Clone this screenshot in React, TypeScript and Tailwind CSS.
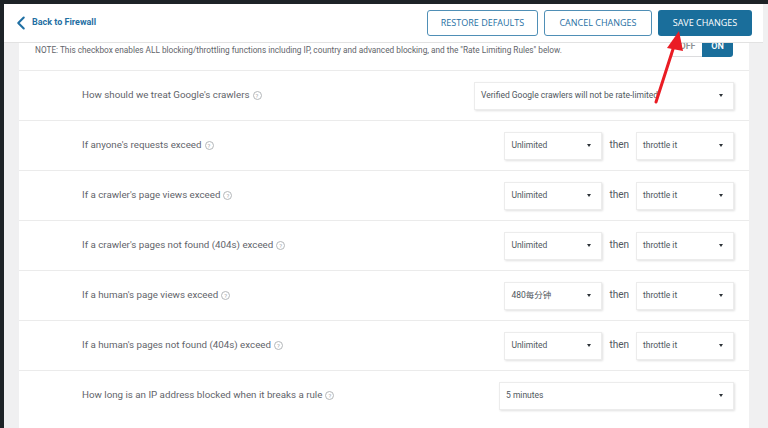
import { ChevronLeft } from 'lucide-react';

type Row =
  | { label: string; kind: 'single'; value: string; width: string }
  | { label: string; kind: 'pair'; limit: string; action: string };

const rows: Row[] = [
  { label: "How should we treat Google's crawlers", kind: 'single', value: 'Verified Google crawlers will not be rate-limited', width: 'w-[260px]' },
  { label: "If anyone's requests exceed", kind: 'pair', limit: 'Unlimited', action: 'throttle it' },
  { label: "If a crawler's page views exceed", kind: 'pair', limit: 'Unlimited', action: 'throttle it' },
  { label: "If a crawler's pages not found (404s) exceed", kind: 'pair', limit: 'Unlimited', action: 'throttle it' },
  { label: "If a human's page views exceed", kind: 'pair', limit: '480每分钟', action: 'throttle it' },
  { label: "If a human's pages not found (404s) exceed", kind: 'pair', limit: 'Unlimited', action: 'throttle it' },
  { label: 'How long is an IP address blocked when it breaks a rule', kind: 'single', value: '5 minutes', width: 'w-[235px]' },
];

function Help() {
  return (
    <span className="ml-[3px] inline-flex h-[9px] w-[9px] items-center justify-center rounded-full border border-[#b4b7ba] text-[6px] leading-none text-[#a7aaad]">
      ?
    </span>
  );
}

function Select({ value, className }: { value: string; className: string }) {
  return (
    <div
      className={`flex h-[28px] items-center justify-between border border-[#ececec] bg-white pl-[6px] pr-[10px] text-[8.5px] text-[#50575e] shadow-[1px_1px_2px_rgba(0,0,0,0.12)] ${className}`}
    >
      <span className="font-['Roboto','Noto_Sans_CJK_SC',sans-serif]">{value}</span>
      <span className="h-0 w-0 border-x-[2.5px] border-t-[3px] border-x-transparent border-t-[#2c3338]" />
    </div>
  );
}

function SettingRow({ row }: { row: Row }) {
  return (
    <div className="flex h-[50px] items-center justify-between border-t border-[#ebebeb] pl-[63px] pr-[15px]">
      <div className="flex items-center text-[9.75px] text-[#5f646a]">
        {row.label}
        <Help />
      </div>
      {row.kind === 'single' ? (
        <Select value={row.value} className={row.width} />
      ) : (
        <div className="flex items-center">
          <Select value={row.limit} className="w-[98px]" />
          <span className="mx-[7px] mb-[3px] text-[10px] text-[#50575e]">then</span>
          <Select value={row.action} className="w-[98px]" />
        </div>
      )}
    </div>
  );
}

export default function App() {
  return (
    <div className="relative h-[428px] w-[768px] overflow-hidden bg-[#f0f0f1] font-['Roboto',sans-serif]">
      <div className="h-[4px] bg-[#1d2327]" />
      <div className="flex h-[424px]">
        <div className="w-[4px] shrink-0 bg-[#1d2327]" />
        <div className="ml-[15px] w-[730px] bg-white">
          <div className="flex h-[66px] items-end justify-between pb-[13px] pl-[16px] pr-[16px]">
            <span className="mb-[1px] text-[8.25px] text-[#5f646a]">
              NOTE: This checkbox enables ALL blocking/throttling functions including IP, country and advanced blocking, and the "Rate Limiting Rules" below.
            </span>
            <div className="flex h-[20px] text-[9px] font-semibold">
              <span className="flex w-[30px] items-center justify-center border border-r-0 border-[#dcdcde] text-[#8c8f94]">OFF</span>
              <span className="flex w-[31px] items-center justify-center rounded-r-[3px] bg-[#1a6e9b] text-white">ON</span>
            </div>
          </div>
          {rows.map((r) => (
            <SettingRow key={r.label} row={r} />
          ))}
        </div>
      </div>

      <header className="absolute left-[4px] top-[4px] flex h-[39px] w-[759px] items-center justify-between border-b border-[#e2e2e2] bg-white pl-[6px] pr-[11px]">
        <div className="flex items-center gap-[0px] text-[#1f6fa3]">
          <ChevronLeft size={22} strokeWidth={2.25} />
          <span className="text-[9px] font-bold">Back to Firewall</span>
        </div>
        <div className="flex gap-[6px] font-['Open_Sans',sans-serif] text-[9px]">
          <button className="h-[26px] w-[111px] rounded-[3px] border border-[#4f8fb6] text-[#1f6fa3]">RESTORE DEFAULTS</button>
          <button className="h-[26px] w-[108px] rounded-[3px] border border-[#4f8fb6] text-[#1f6fa3]">CANCEL CHANGES</button>
          <button className="h-[26px] w-[94px] rounded-[3px] bg-[#1a6e9b] text-white">SAVE CHANGES</button>
        </div>
      </header>

      <svg className="pointer-events-none absolute left-0 top-0" width="768" height="428" viewBox="0 0 768 428">
        <line x1="656" y1="102" x2="674" y2="46" stroke="#ea1c24" strokeWidth="3" strokeLinecap="round" />
        <polygon points="679,31 667,48 683,51" fill="#ea1c24" />
      </svg>
    </div>
  );
}
